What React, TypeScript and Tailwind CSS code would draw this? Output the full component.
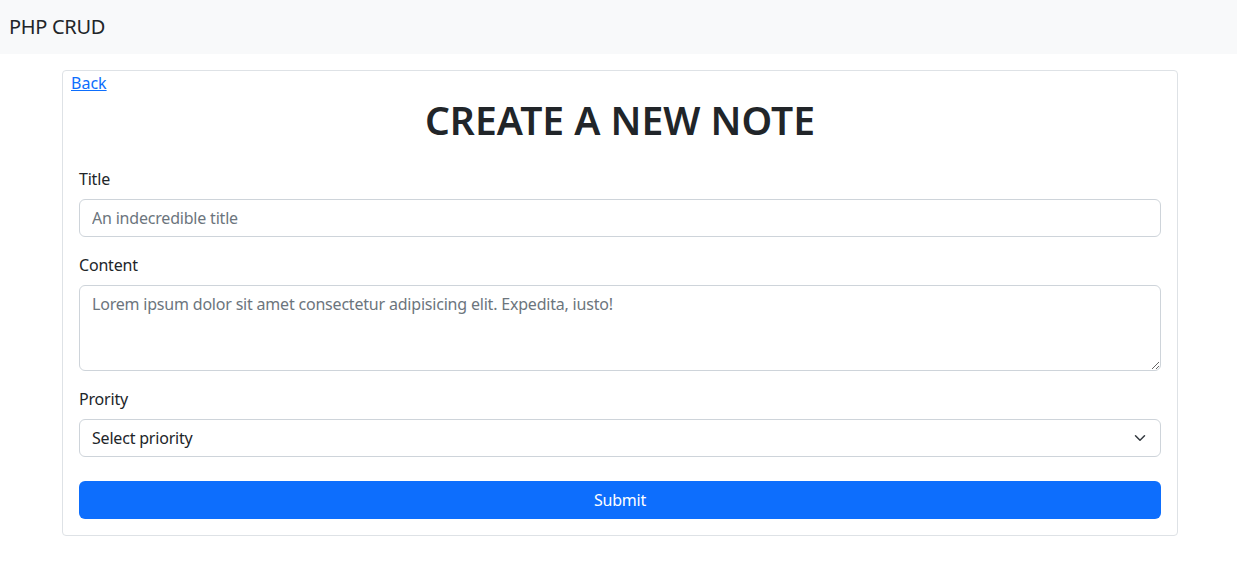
import React from "react";

const font = "font-['Segoe_UI','Noto_Sans','Open_Sans',sans-serif]";

export default function App() {
    return (
        <div className={`min-h-screen bg-white text-[#212529] text-[16px] ${font}`}>
            {/* navbar */}
            <nav className="h-[54px] bg-[#f8f9fa] flex items-center px-[9px]">
                <span className="text-[20px] leading-[30px] tracking-[-0.3px]">PHP CRUD</span>
            </nav>

            <div className="w-[1116px] ml-[62px] mt-[16px] border border-[#dee2e6] rounded-[4px] px-[8px] pb-[16px]">
                <a href="#" className="text-[#0d6efd] underline leading-[24px] block w-fit">Back</a>
                <h1 className="text-center text-[39px] leading-[48px] font-semibold mt-[1px] mb-[23px]">
                    CREATE A NEW NOTE
                </h1>

                <form className="px-[8px] tracking-[-0.2px]" onSubmit={(e) => e.preventDefault()}>
                    <div className="mb-[16px]">
                        <label className="block mb-[8px] leading-[24px]">Title</label>
                        <input
                            type="text"
                            placeholder="An indecredible title"
                            className="block w-full h-[38px] px-[12px] border border-[#ced4da] rounded-[6px] placeholder:text-[#6c757d] outline-none"
                        />
                    </div>
                    <div className="mb-[16px]">
                        <label className="block mb-[8px] leading-[24px]">Content</label>
                        <textarea
                            placeholder="Lorem ipsum dolor sit amet consectetur adipisicing elit. Expedita, iusto!"
                            className="block w-full h-[86px] px-[12px] py-[6px] leading-[24px] border border-[#ced4da] rounded-[6px] placeholder:text-[#6c757d] outline-none"
                        />
                    </div>
                    <div className="mb-[24px]">
                        <label className="block mb-[8px] leading-[24px]">Prority</label>
                        <div className="relative">
                            <select className="block w-full h-[38px] pl-[12px] pr-[36px] border border-[#ced4da] rounded-[6px] appearance-none bg-white outline-none">
                                <option>Select priority</option>
                                <option>Low</option>
                                <option>Medium</option>
                                <option>High</option>
                            </select>
                            <svg
                                className="absolute right-[14px] top-[13px] pointer-events-none"
                                width="14"
                                height="12"
                                viewBox="0 0 16 16"
                                fill="none"
                            >
                                <path d="m2 5 6 6 6-6" stroke="#343a40" strokeWidth="2" strokeLinecap="round" strokeLinejoin="round" />
                            </svg>
                        </div>
                    </div>
                    <button
                        type="submit"
                        className="w-full h-[38px] bg-[#0d6efd] text-white rounded-[6px] leading-[24px]"
                    >
                        Submit
                    </button>
                </form>
            </div>
        </div>
    );
}
